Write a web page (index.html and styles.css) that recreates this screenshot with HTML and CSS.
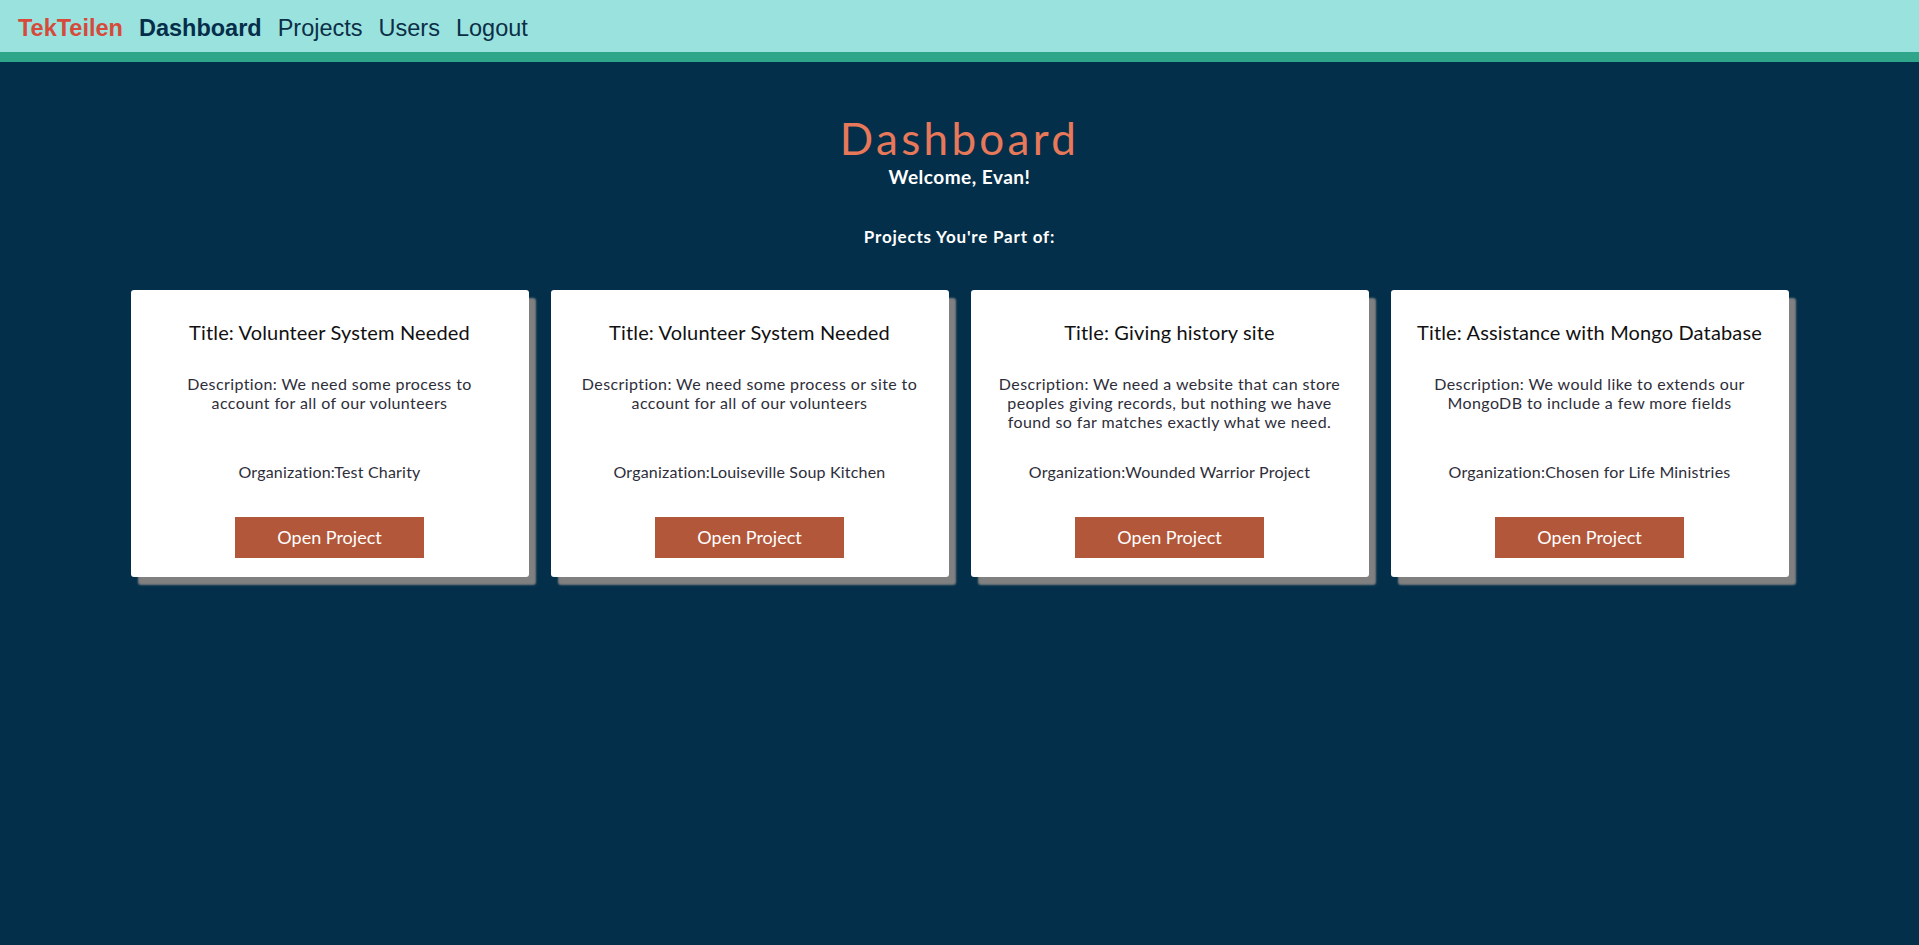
FILE: index.html
```html
<!DOCTYPE html>
<html lang="en">
<head>
<meta charset="utf-8">
<title>TekTeilen - Dashboard</title>
<link rel="stylesheet" href="styles.css">
</head>
<body>
<nav class="topnav">
  <a class="brand" href="#">TekTeilen</a>
  <a class="nav-link active" href="#">Dashboard</a>
  <a class="nav-link" href="#">Projects</a>
  <a class="nav-link" href="#">Users</a>
  <a class="nav-link" href="#">Logout</a>
</nav>
<main class="main">
  <header class="intro">
    <h1 class="page-title">Dashboard</h1>
    <p class="welcome">Welcome, Evan!</p>
    <h2 class="section-title">Projects You're Part of:</h2>
  </header>
  <section class="cards">
    <article class="card">
      <h3 class="card-title">Title: Volunteer System Needed</h3>
      <p class="card-desc">Description: We need some process to account for all of our volunteers</p>
      <p class="card-org">Organization:Test Charity</p>
      <a class="btn" href="#">Open Project</a>
    </article>
    <article class="card">
      <h3 class="card-title">Title: Volunteer System Needed</h3>
      <p class="card-desc">Description: We need some process or site to account for all of our volunteers</p>
      <p class="card-org">Organization:Louiseville Soup Kitchen</p>
      <a class="btn" href="#">Open Project</a>
    </article>
    <article class="card">
      <h3 class="card-title">Title: Giving history site</h3>
      <p class="card-desc">Description: We need a website that can store peoples giving records, but nothing we have found so far matches exactly what we need.</p>
      <p class="card-org">Organization:Wounded Warrior Project</p>
      <a class="btn" href="#">Open Project</a>
    </article>
    <article class="card">
      <h3 class="card-title">Title: Assistance with Mongo Database</h3>
      <p class="card-desc">Description: We would like to extends our MongoDB to include a few more fields</p>
      <p class="card-org">Organization:Chosen for Life Ministries</p>
      <a class="btn" href="#">Open Project</a>
    </article>
  </section>
</main>
</body>
</html>
```
FILE: styles.css
```css
* { box-sizing: border-box; }

html, body {
  margin: 0;
  padding: 0;
}

body {
  background: #032f4a;
  min-height: 945px;
  font-family: Lato, "Noto Sans", sans-serif;
}

.topnav {
  display: flex;
  align-items: flex-start;
  gap: 16px;
  height: 62px;
  padding: 15px 0 0 18px;
  background: #9ae2de;
  border-bottom: 10px solid #2fa58a;
  font-family: "Liberation Sans", Arial, sans-serif;
  font-size: 23.5px;
  line-height: normal;
}

.topnav a {
  text-decoration: none;
  color: #0b2f47;
}

.topnav .brand {
  color: #d54a3a;
  font-weight: bold;
}

.topnav .nav-link.active {
  font-weight: bold;
  color: #052e4a;
}

.main {
  padding-top: 50px;
}

.intro {
  text-align: center;
  color: #ffffff;
}

.page-title {
  margin: 0;
  font-size: 44px;
  font-weight: 400;
  line-height: 1.2;
  color: #e8785a;
  letter-spacing: 3.3px;
}

.welcome {
  margin: 1px 0 0;
  font-size: 19px;
  font-weight: 700;
  line-height: 1.2;
  letter-spacing: 0.5px;
}

.section-title {
  margin: 38px 0 0;
  font-size: 17px;
  font-weight: 700;
  line-height: 1.2;
  letter-spacing: 0.8px;
}

.cards {
  display: flex;
  justify-content: center;
  align-items: flex-start;
  gap: 22px;
  margin-top: 43px;
}

.card {
  width: 398px;
  background: #ffffff;
  border-radius: 3px;
  box-shadow: 7px 8px 2px #808080;
  padding: 30px 27px 19px;
  display: flex;
  flex-direction: column;
  align-items: center;
  text-align: center;
}

.card-title {
  margin: 0;
  font-size: 20px;
  font-weight: 400;
  line-height: 24px;
  color: #111111;
  letter-spacing: 0.15px;
  white-space: nowrap;
}

.card-desc {
  margin: 30px 0 0;
  min-height: 57px;
  font-size: 16px;
  font-weight: 400;
  line-height: 19px;
  color: #2e2e3a;
  letter-spacing: 0.4px;
}

.card-org {
  margin: 31px 0 0;
  font-size: 16px;
  line-height: 19px;
  color: #2e2e3a;
  letter-spacing: 0.2px;
}

.btn {
  display: flex;
  align-items: center;
  justify-content: center;
  width: 189px;
  height: 41px;
  margin-top: 36px;
  background: #b3573a;
  color: #ffffff;
  font-size: 18px;
  text-decoration: none;
}
```
